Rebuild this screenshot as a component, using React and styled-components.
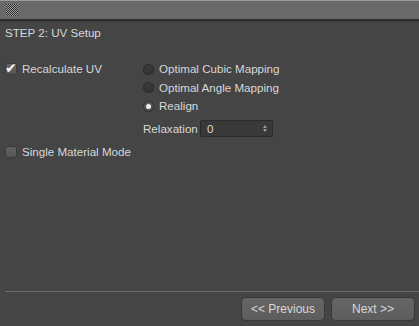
import React from 'react';
import styled, { createGlobalStyle } from 'styled-components';

const GlobalStyle = createGlobalStyle`
    html, body {
        margin: 0;
        padding: 0;
        background: #454545;
    }
    * {
        box-sizing: border-box;
    }
`;

const Window = styled.div`
    width: 419px;
    height: 326px;
    display: flex;
    flex-direction: column;
    background: #454545;
    font-family: "Liberation Sans", Arial, sans-serif;
    font-size: 11.6px;
    color: #d8d8d8;
    overflow: hidden;
`;

const TitleBar = styled.div`
    height: 21px;
    flex: none;
    display: flex;
    align-items: center;
    padding-left: 6px;
    background: #696969;
    border-top: 1px solid #9a9a9a;
    border-bottom: 2px solid #2e2e2e;
    box-shadow: 0 1px 0 #3c3c3c;
`;

const Body = styled.div`
    flex: 1;
    display: flex;
    flex-direction: column;
    padding: 5px 0 0 5px;
`;

const Heading = styled.div`
    height: 14px;
    line-height: 14px;
`;

const Columns = styled.div`
    display: grid;
    grid-template-columns: 138px 1fr;
    margin-top: 22px;
`;

const Stack = styled.div`
    display: flex;
    flex-direction: column;
    gap: ${p => p.gap || 0}px;
`;

const Option = styled.label`
    display: flex;
    align-items: center;
    gap: 5px;
    height: 14px;
    line-height: 14px;
`;

const Box = styled.span`
    position: relative;
    width: 12px;
    height: 12px;
    border-radius: 3px;
    background: linear-gradient(#646464, #555555);
    box-shadow: inset 0 0 0 1px #3a3a3a;
    flex: none;
`;

const Tick = styled.span`
    position: absolute;
    left: 0px;
    top: -3px;
    font-size: 14px;
    font-family: "DejaVu Sans", sans-serif;
    color: #f4f4f4;
    line-height: 16px;
`;

const Radio = styled.span`
    width: 11px;
    height: 11px;
    border-radius: 50%;
    background: ${p => (p.on ? 'linear-gradient(#5e5e5e, #4f4f4f)' : 'linear-gradient(#3a3a3a, #333333)')};
    box-shadow: inset 0 0 0 1px #2f2f2f;
    display: flex;
    align-items: center;
    justify-content: center;
    flex: none;
    &::after {
        content: '';
        width: 5px;
        height: 5px;
        border-radius: 50%;
        background: ${p => (p.on ? '#eeeeee' : 'transparent')};
    }
`;

const FieldRow = styled.div`
    display: flex;
    align-items: center;
    margin-top: 2px;
    height: 17px;
`;

const FieldLabel = styled.span`
    width: 57px;
    white-space: nowrap;
`;

const NumberInput = styled.div`
    width: 73px;
    height: 17px;
    display: flex;
    align-items: center;
    justify-content: space-between;
    padding: 0 5px 0 6px;
    background: #393939;
    border: 1px solid #2b2b2b;
    border-radius: 2px;
    color: #dcdcdc;
`;

const Spinner = styled.span`
    display: flex;
    flex-direction: column;
    gap: 1px;
    &::before, &::after {
        content: '';
        border-left: 2.5px solid transparent;
        border-right: 2.5px solid transparent;
    }
    &::before {
        border-bottom: 3px solid #9a9a9a;
    }
    &::after {
        border-top: 3px solid #9a9a9a;
    }
`;

const SingleRow = styled.div`
    margin-top: 8px;
`;

const Spacer = styled.div`
    flex: 1;
`;

const Footer = styled.div`
    border-top: 1px solid #6c6c6c;
    display: flex;
    justify-content: flex-end;
    gap: 6px;
    padding: 5px 4px 5px 0;
`;

const Button = styled.button`
    width: 84px;
    height: 24px;
    border-radius: 5px;
    border: 1px solid #393939;
    background: linear-gradient(#656565, #5d5d5d);
    color: #d8d8d8;
    font-family: "Liberation Sans", Arial, sans-serif;
    font-size: 12px;
    padding: 0;
`;

function Grip() {
    const dots = [];
    for (let y = 0; y < 12; y++) {
        for (let x = 0; x < 12; x++) {
            const dark = (x + y) % 2 === 0;
            dots.push(<rect key={`${x}-${y}`} x={x} y={y} width="1" height="1" fill={dark ? '#2a2a2a' : '#a0a0a0'} />);
        }
    }
    return <svg width="12" height="12" viewBox="0 0 12 12" shapeRendering="crispEdges">{dots}</svg>;
}

function App() {
    return (
        <Window>
            <GlobalStyle />
            <TitleBar><Grip /></TitleBar>
            <Body>
                <Heading>STEP 2: UV Setup</Heading>
                <Columns>
                    <div>
                        <Option><Box><Tick>✔</Tick></Box>Recalculate UV</Option>
                    </div>
                    <Stack gap={4.5}>
                        <Option><Radio />Optimal Cubic Mapping</Option>
                        <Option><Radio />Optimal Angle Mapping</Option>
                        <Option><Radio on />Realign</Option>
                        <FieldRow>
                            <FieldLabel>Relaxation</FieldLabel>
                            <NumberInput><span>0</span><Spinner /></NumberInput>
                        </FieldRow>
                    </Stack>
                </Columns>
                <SingleRow>
                    <Option><Box />Single Material Mode</Option>
                </SingleRow>
                <Spacer />
                <Footer>
                    <Button>&lt;&lt; Previous</Button>
                    <Button>Next &gt;&gt;</Button>
                </Footer>
            </Body>
        </Window>
    );
}

export default App;
